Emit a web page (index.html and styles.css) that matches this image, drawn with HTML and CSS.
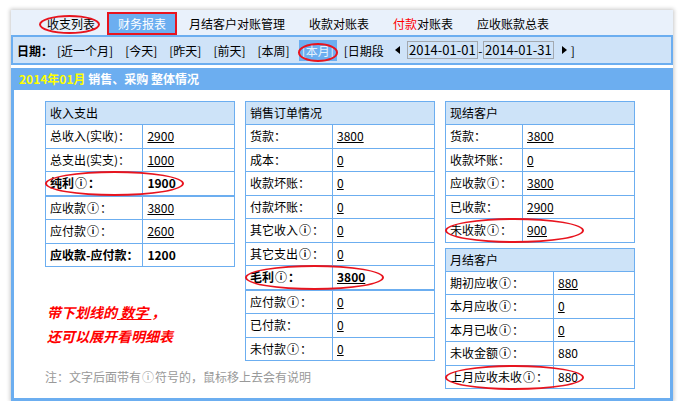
FILE: index.html
```html
<!DOCTYPE html>
<html lang="zh-CN">
<head>
    <meta charset="UTF-8">
    <title>财务报表</title>
    <link rel="stylesheet" href="styles.css">
</head>
<body>
<div class="frame">
    <div class="tabs">
        <span class="tab">收支列表<i class="mark mark-tab"></i></span>
        <span class="tab active">财务报表</span>
        <span class="tab">月结客户对账管理</span>
        <span class="tab">收款对账表</span>
        <span class="tab"><em>付款</em>对账表</span>
        <span class="tab">应收账款总表</span>
    </div>

    <div class="filter">
        <b>日期：</b>
        <a class="range">[近一个月]</a>
        <a class="range">[今天]</a>
        <a class="range">[昨天]</a>
        <a class="range">[前天]</a>
        <a class="range">[本周]</a>
        <a class="range on">[本月]<i class="mark mark-month"></i></a>
        <span class="range">[日期段</span>
        <svg class="arrow prev" width="5" height="8" viewBox="0 0 5 8"><path d="M5 0V8L0 4Z" fill="#000"/></svg>
        <span class="date">2014-01-01</span><span class="dash">-</span><span class="date">2014-01-31</span>
        <svg class="arrow next" width="5" height="8" viewBox="0 0 5 8"><path d="M0 0V8L5 4Z" fill="#000"/></svg>
        <span class="close">]</span>
    </div>

    <div class="title"><span class="month">2014年01月</span> 销售、采购 整体情况</div>

    <div class="content">
        <div class="col">
            <table class="t1">
                <tr><th colspan="2">收入支出</th></tr>
                <tr><td>总收入(实收)：</td><td><u>2900</u></td></tr>
                <tr><td>总支出(实支)：</td><td><u>1000</u></td></tr>
                <tr class="sep"><td class="mk"><b>纯利<span class="i">ⓘ</span>：</b><i class="mark mark-row"></i></td><td><b>1900</b></td></tr>
                <tr><td>应收款<span class="i">ⓘ</span>：</td><td><u>3800</u></td></tr>
                <tr><td>应付款<span class="i">ⓘ</span>：</td><td><u>2600</u></td></tr>
                <tr><td><b>应收款-应付款：</b></td><td><b>1200</b></td></tr>
            </table>
            <div class="tip">
                <p>带下划线的<u> 数字 </u>，</p>
                <p>还可以展开看明细表</p>
            </div>
            <p class="note">注：文字后面带有<span class="i">ⓘ</span>符号的，鼠标移上去会有说明</p>
        </div>

        <div class="col">
            <table class="t2">
                <tr><th colspan="2">销售订单情况</th></tr>
                <tr><td>货款：</td><td><u>3800</u></td></tr>
                <tr><td>成本：</td><td><u>0</u></td></tr>
                <tr><td>收款坏账：</td><td><u>0</u></td></tr>
                <tr><td>付款坏账：</td><td><u>0</u></td></tr>
                <tr><td>其它收入<span class="i">ⓘ</span>：</td><td><u>0</u></td></tr>
                <tr><td>其它支出<span class="i">ⓘ</span>：</td><td><u>0</u></td></tr>
                <tr class="sep"><td class="mk"><b>毛利<span class="i">ⓘ</span>：</b><i class="mark mark-row"></i></td><td><b><u>3800</u></b></td></tr>
                <tr><td>应付款<span class="i">ⓘ</span>：</td><td><u>0</u></td></tr>
                <tr><td>已付款：</td><td><u>0</u></td></tr>
                <tr><td>未付款<span class="i">ⓘ</span>：</td><td><u>0</u></td></tr>
            </table>
        </div>

        <div class="col">
            <table class="t3">
                <tr><th colspan="2">现结客户</th></tr>
                <tr><td>货款：</td><td><u>3800</u></td></tr>
                <tr><td>收款坏账：</td><td><u>0</u></td></tr>
                <tr><td>应收款<span class="i">ⓘ</span>：</td><td><u>3800</u></td></tr>
                <tr><td>已收款：</td><td><u>2900</u></td></tr>
                <tr><td class="mk">未收款<span class="i">ⓘ</span>：<i class="mark mark-row"></i></td><td><u>900</u></td></tr>
            </table>
            <table class="t4">
                <tr><th colspan="2">月结客户</th></tr>
                <tr><td>期初应收<span class="i">ⓘ</span>：</td><td><u>880</u></td></tr>
                <tr><td>本月应收<span class="i">ⓘ</span>：</td><td><u>0</u></td></tr>
                <tr><td>本月已收<span class="i">ⓘ</span>：</td><td><u>0</u></td></tr>
                <tr><td>未收金额<span class="i">ⓘ</span>：</td><td>880</td></tr>
                <tr><td class="mk">上月应收未收<span class="i">ⓘ</span>：<i class="mark mark-row"></i></td><td>880</td></tr>
            </table>
        </div>
    </div>
</div>
</body>
</html>
```

FILE: styles.css
```css
body {
    margin: 0;
    background: #fff;
    font-family: "Noto Sans CJK SC", "Liberation Sans", sans-serif;
    font-size: 12px;
    color: #000;
}
.frame {
    margin: 10px 0 0 11px;
    width: 662px;
    box-shadow: 0 0 4px 1px rgba(0, 0, 0, 0.22);
}

/* tabs */
.tabs {
    display: flex;
    align-items: flex-end;
    height: 25px;
    padding-left: 24px;
    background: #e9f1fb;
}
.tab {
    position: relative;
    padding: 0 12px;
    line-height: 23px;
    font-size: 12px;
}
.tab em {
    font-style: normal;
    color: #f00;
}
.tab.active {
    padding: 0 9px;
    line-height: 19px;
    border: 2px solid #e8141e;
    background: #6caef0;
    color: #fff;
}

/* red marks */
.mark {
    position: absolute;
    box-sizing: border-box;
    border: 2px solid #e8141e;
    border-radius: 50%;
}
.mark-tab {
    left: 4px;
    top: 3px;
    width: 61px;
    height: 19px;
}
.mark-month {
    left: -1px;
    top: 3px;
    width: 40px;
    height: 19px;
}
.mark-row {
    left: -1px;
    top: -1px;
    width: 139px;
    height: 25px;
}

/* date filter */
.filter {
    display: flex;
    align-items: center;
    height: 26px;
    padding-left: 4px;
    border: 2px solid #6caef0;
    background: #cfe3f8;
}
.filter b {
    margin-right: 4px;
}
.range {
    margin-right: 12px;
}
.range.on {
    position: relative;
    margin-left: -3px;
    margin-right: 7px;
    padding: 0 3px;
    line-height: 21px;
    background: #6caef0;
    color: #e4f1fd;
}
.arrow {
    margin: 0 7px 0 -1px;
}
.arrow.next {
    margin: 0 4px 0 8px;
}
.date {
    width: 69px;
    height: 16px;
    border: 1px solid #a3a9b0;
    font-size: 13px;
    line-height: 16px;
    text-align: center;
}
.dash {
    width: 5px;
    text-align: center;
}

/* title bar */
.title {
    margin-top: 3px;
    height: 22px;
    padding-left: 8px;
    line-height: 22px;
    background: #6caef0;
    color: #fff;
    font-weight: bold;
}
.month {
    color: #ffff00;
}

/* content */
.content {
    display: flex;
    gap: 10px;
    align-items: flex-start;
    box-sizing: border-box;
    height: 311px;
    padding: 11px 0 0 31px;
    border: 3px solid #6caef0;
    border-top: 0;
}
.col {
    width: 190px;
}
table {
    width: 190px;
    border-collapse: collapse;
}
th, td {
    border: 1px solid #6caef0;
    padding: 0 4px;
    line-height: 22.5px;
    text-align: left;
    white-space: nowrap;
}
th {
    font-weight: normal;
    line-height: 22px;
    background: #cde3f8;
}
td.mk {
    position: relative;
}
tr.sep td {
    border-bottom-width: 2px;
}
.t1 td:first-child { width: 88px; }
.t2 td:first-child { width: 78px; }
.t3 td:first-child { width: 68px; }
.t4 td:first-child { width: 99px; }
.t4 {
    margin-top: 5px;
}
.i {
    font-size: 12px;
    font-weight: bold;
    margin: 0 1px;
}

.tip {
    margin-top: 33px;
    color: #f00;
    font-size: 14px;
    font-weight: bold;
    font-style: italic;
}
.tip p {
    margin: 0;
    padding-left: 2px;
    line-height: 24px;
}
.note {
    margin: 20px 0 0;
    color: #999;
    white-space: nowrap;
    line-height: 18px;
}
.note .i {
    font-weight: normal;
}
```
